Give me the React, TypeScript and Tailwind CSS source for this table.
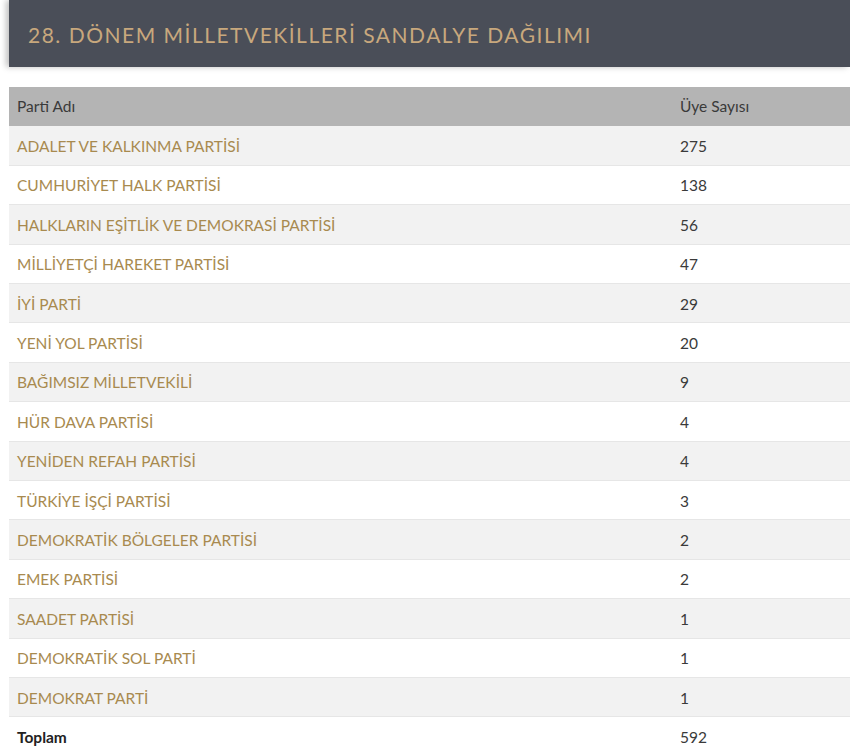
const rows: [string, number][] = [
  ['ADALET VE KALKINMA PARTİSİ', 275],
  ['CUMHURİYET HALK PARTİSİ', 138],
  ['HALKLARIN EŞİTLİK VE DEMOKRASİ PARTİSİ', 56],
  ['MİLLİYETÇİ HAREKET PARTİSİ', 47],
  ['İYİ PARTİ', 29],
  ['YENİ YOL PARTİSİ', 20],
  ['BAĞIMSIZ MİLLETVEKİLİ', 9],
  ['HÜR DAVA PARTİSİ', 4],
  ['YENİDEN REFAH PARTİSİ', 4],
  ['TÜRKİYE İŞÇİ PARTİSİ', 3],
  ['DEMOKRATİK BÖLGELER PARTİSİ', 2],
  ['EMEK PARTİSİ', 2],
  ['SAADET PARTİSİ', 1],
  ['DEMOKRATİK SOL PARTİ', 1],
  ['DEMOKRAT PARTİ', 1],
];

export default function App() {
  return (
    <div className="h-[756px] w-[850px] overflow-hidden bg-white font-['Lato',sans-serif]">
      <div className="ml-[9px] flex h-[67px] items-center bg-[#4a4e58] pl-[19px] shadow-[-3px_0_6px_rgba(0,0,0,0.25)]">
        <h1 className="pt-[2px] text-[21px] font-normal tracking-[1.5px] text-[#c8a87d]">
          28. DÖNEM MİLLETVEKİLLERİ SANDALYE DAĞILIMI
        </h1>
      </div>

      <table className="ml-[9px] mt-[20px] w-[841px] border-collapse text-[15.5px]">
        <thead>
          <tr className="h-[39px] bg-[#b4b4b4] text-[#3a3a3a]">
            <th className="pl-[8px] text-left font-normal">Parti Adı</th>
            <th className="w-[170px] text-left font-normal">Üye Sayısı</th>
          </tr>
        </thead>
        <tbody>
          {rows.map(([name, count], i) => (
            <tr key={name} className={`h-[39.4px] border-b border-[#e6e6e6] ${i % 2 === 0 ? 'bg-[#f2f2f2]' : 'bg-white'}`}>
              <td className="pl-[8px] pt-[2px] text-[#a88a4f]">{name}</td>
              <td className="pt-[2px] text-[#3a3a3a]">{count}</td>
            </tr>
          ))}
          <tr className="h-[39.4px] border-b border-[#e6e6e6]">
            <td className="pl-[8px] pt-[2px] font-bold text-[#222]">Toplam</td>
            <td className="pt-[2px] text-[#3a3a3a]">592</td>
          </tr>
        </tbody>
      </table>
    </div>
  );
}
